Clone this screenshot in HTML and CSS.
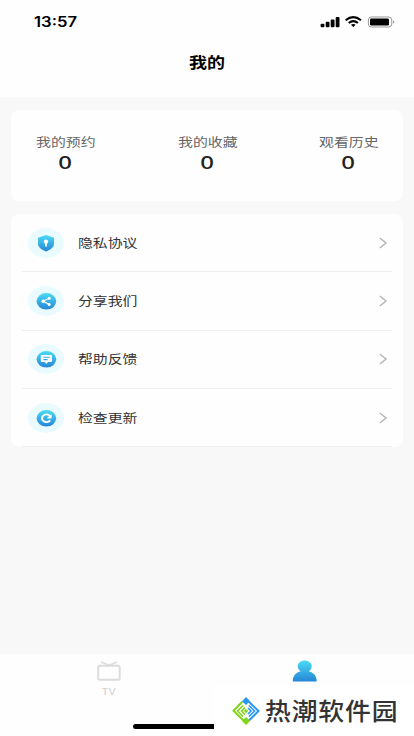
FILE: index.html
```html
<!DOCTYPE html>
<html lang="zh-CN">
<head>
<meta charset="utf-8">
<meta name="viewport" content="width=device-width, initial-scale=1">
<title>我的</title>
<link rel="stylesheet" href="styles.css">
</head>
<body>
<svg class="defs" width="0" height="0" aria-hidden="true">
  <defs>
    <linearGradient id="blue" x1="0" y1="0" x2="0" y2="1"><stop offset="0" stop-color="#4bdcf5"/><stop offset="1" stop-color="#2685d5"/></linearGradient>
  </defs>
</svg>
<div class="screen">
  <header class="header">
    <div class="status">
      <span class="time">13:57</span>
      <svg class="signals" width="76" height="14" viewBox="0 0 76 14">
        <rect x=".6" y="8.7" width="3.8" height="3.6" rx="1"/><rect x="5.7" y="6.8" width="3.8" height="5.5" rx="1"/><rect x="10.7" y="4.4" width="3.8" height="7.9" rx="1"/><rect x="15.7" y="2" width="3.8" height="10.3" rx="1"/>
        <g fill="none" stroke="#000" stroke-width="2"><path d="M25.6 5.2Q33.3-.9 41 5.2"/><path d="M28.7 8Q33.3 4.3 37.9 8"/></g>
        <path d="M30.9 9.7Q33.3 8.2 35.7 9.7L33.3 12Z"/>
        <rect x="48.4" y="2" width="23.4" height="10" rx="3" fill="none" stroke="#999"/>
        <rect x="50" y="3.5" width="19" height="7.1" rx="1.4"/><path d="M73.2 5.4Q75.4 7 73.2 8.6Z" fill="#888"/>
      </svg>
    </div>
    <h1 class="title"><span class="wide">我的</span></h1>
  </header>
  <main class="content">
    <section class="stats">
      <div class="stat"><span class="wide label">我的预约</span><b>0</b></div>
      <div class="stat"><span class="wide label">我的收藏</span><b>0</b></div>
      <div class="stat"><span class="wide label">观看历史</span><b>0</b></div>
    </section>
    <nav class="menu">
      <a class="row">
        <svg class="icon" width="36" height="30" viewBox="0 0 36 30"><ellipse cx="18" cy="15" rx="18" ry="15" fill="#e9fbff"/><path d="M18 7L26 9.7V15.5C26 19.5 22.5 21.8 18 23.5C13.5 21.8 10 19.5 10 15.5V9.7Z" fill="url(#blue)"/><circle cx="18" cy="13.6" r="2.2" fill="#fff"/><path d="M17.2 14h1.7v4.6h-1.7z" fill="#fff"/></svg>
        <span class="wide name">隐私协议</span>
        <svg class="arrow" width="8" height="12" viewBox="0 0 8 12"><path d="M.8 1L7 6L.8 11"/></svg>
      </a>
      <a class="row">
        <svg class="icon" width="36" height="30" viewBox="0 0 36 30"><ellipse cx="18" cy="15" rx="18" ry="15" fill="#e9fbff"/><ellipse cx="18.4" cy="15.3" rx="9.8" ry="8.3" fill="url(#blue)"/><path d="M21.2 12.2L15 15.2L21.2 18.4" fill="none" stroke="#fff" stroke-width="1.2"/><circle cx="21.2" cy="12.2" r="1.5" fill="#fff"/><circle cx="15.2" cy="15.2" r="1.7" fill="#fff"/><circle cx="21.2" cy="18.4" r="1.5" fill="#fff"/></svg>
        <span class="wide name">分享我们</span>
        <svg class="arrow" width="8" height="12" viewBox="0 0 8 12"><path d="M.8 1L7 6L.8 11"/></svg>
      </a>
      <a class="row">
        <svg class="icon" width="36" height="30" viewBox="0 0 36 30"><ellipse cx="18" cy="15" rx="18" ry="15" fill="#e9fbff"/><ellipse cx="18.4" cy="15.3" rx="9.8" ry="8.3" fill="url(#blue)"/><path d="M13.8 11h9.2q1 0 1 1v5q0 1-1 1h-3l-1.6 2-1.6-2h-3q-1 0-1-1v-5q0-1 1-1z" fill="#fff"/><path d="M15.3 13.3h6.4M15.3 15.6h4.4" stroke="#39a9e2" stroke-width="1.1"/></svg>
        <span class="wide name">帮助反馈</span>
        <svg class="arrow" width="8" height="12" viewBox="0 0 8 12"><path d="M.8 1L7 6L.8 11"/></svg>
      </a>
      <a class="row">
        <svg class="icon" width="36" height="30" viewBox="0 0 36 30"><ellipse cx="18" cy="15" rx="18" ry="15" fill="#e9fbff"/><ellipse cx="18.4" cy="15.3" rx="9.8" ry="8.3" fill="url(#blue)"/><path d="M21.7 12.7A4.5 3.7 0 1 0 22.2 17.4" fill="none" stroke="#fff" stroke-width="2"/><path d="M23.6 11V15.6H18.6Z" fill="#fff"/></svg>
        <span class="wide name">检查更新</span>
        <svg class="arrow" width="8" height="12" viewBox="0 0 8 12"><path d="M.8 1L7 6L.8 11"/></svg>
      </a>
    </nav>
  </main>
  <footer class="tabs">
    <a class="tab">
      <svg width="26" height="22" viewBox="0 0 26 22"><g fill="none" stroke="#dcdcdc"><rect x="2.2" y="5.7" width="21.5" height="14" rx="1.5" stroke-width="2"/><path d="M5 2.1L13 5.3L21 2.1" stroke-width="1.6"/></g></svg>
      <span class="wide">TV</span>
    </a>
    <a class="tab">
      <svg width="26" height="22" viewBox="0 0 26 22"><path d="M12.7.5C8.7.5 5.7 3 5.7 6.3C5.7 8.5 7 10.3 8.7 11.3C4 12.5.8 15.5.8 21.5H24.7C24.7 15.5 21.5 12.5 16.7 11.3C18.5 10.3 19.7 8.5 19.7 6.3C19.7 3 16.7.5 12.7.5Z" fill="url(#blue)"/></svg>
    </a>
  </footer>
  <div class="home-bar"></div>
  <div class="watermark">
    <svg width="28" height="28" viewBox="0 0 28 28"><g fill="none" stroke-width="2"><path d="M10.5 4.5L1.5 13.8L14 26" stroke="#80d51a"/><path d="M13.5 1.5L26.5 14L17 23.5" stroke="#2997f4"/></g><g fill="none" stroke-width="1.6"><path d="M11 8.5L5.5 14L11 19.5M13 10.5L9.5 14L13 17.5" stroke="#80d51a"/><path d="M17 8.5L22.5 14L17 19.5M16 11L19 14L16 17" stroke="#2997f4"/></g><path d="M14 0L18 4.2L14 8L10 4.2Z" fill="#2997f4"/><path d="M14 20L18 24L14 28L10 24Z" fill="#80d51a"/><circle cx="14" cy="14" r="1.8" fill="#80d51a"/></svg>
    <span>热潮软件园</span>
  </div>
</div>
</body>
</html>
```
FILE: styles.css
```css
* { box-sizing: border-box; }
body { margin: 0; font-family: "Liberation Sans", "Noto Sans CJK SC", sans-serif; }
.defs { position: absolute; }
.screen { position: relative; width: 414px; height: 736px; overflow: hidden; display: flex; flex-direction: column; background: #f8f8f8; }
.wide { display: inline-block; transform: scaleX(1.2); }
.header { height: 97px; background: #fefefe; }
.status { height: 44px; display: flex; justify-content: space-between; align-items: center; padding: 0 18px 0 34px; }
.time { font: 600 14px/18px Inter, sans-serif; transform: scaleX(1.19); transform-origin: left; }
.title { margin: 8px 0 0; text-align: center; font-size: 15px; line-height: 22px; font-weight: 700; color: #000; }
.content { flex: 1; padding: 13px 11px 0; }
.stats { height: 91px; border-radius: 8px; background: #fefefe; display: flex; justify-content: space-between; padding: 24px 24px 0 25px; }
.stat { width: 60px; display: flex; flex-direction: column; align-items: center; }
.label { font-size: 12.4px; line-height: 18px; color: #666; white-space: nowrap; }
.stat b { font: 500 18px/21px "Noto Sans", sans-serif; color: #222; margin: 0 1px 0 0; transform: scaleX(1.33); }
.menu { margin-top: 13px; border-radius: 8px; background: #fefefe; padding: 0 11px; }
.row { height: 58.3px; display: flex; align-items: center; border-bottom: 1px solid #efefef; padding: 0 5px 0 6px; }
.name { margin: 2px 0 0 14px; transform-origin: left; font-size: 12.4px; line-height: 18px; color: #333; }
.arrow { margin-left: auto; fill: none; stroke: #b8b8b8; stroke-width: 1.5; }
.tabs { height: 82px; background: #fefefe; display: grid; grid-template-columns: 1fr 1fr; padding: 6px 11px 0; }
.tab { display: flex; flex-direction: column; align-items: center; padding-right: 1px; }
.tab span { margin-top: 5px; font: 500 8.5px/10px Inter, sans-serif; color: #d5d5d5; }
.home-bar { position: absolute; left: 133px; bottom: 7px; width: 148px; height: 5px; border-radius: 3px; background: #000; }
.watermark { position: absolute; left: 214px; bottom: 0; width: 200px; height: 50px; background: #fff; display: flex; align-items: center; padding-left: 18px; }
.watermark span { margin: 2px 0 0 5px; font-size: 24px; line-height: 30px; font-weight: 500; letter-spacing: 0.8px; color: #333; transform: scaleX(1.075); transform-origin: left; white-space: nowrap; }
```
